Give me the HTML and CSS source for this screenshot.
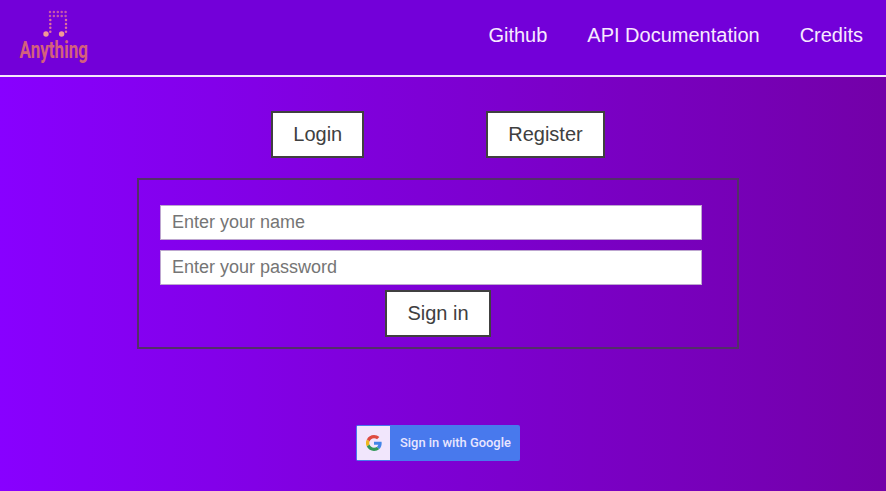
FILE: index.html
```html
<!DOCTYPE html>
<html lang="en">
<head>
<meta charset="utf-8">
<title>Anything</title>
<link rel="stylesheet" href="styles.css">
</head>
<body>
<header class="header">
  <svg class="logo" width="90" height="66" viewBox="0 0 90 66">
    <g class="dots" stroke-width="2.5" stroke-linecap="round" stroke-dasharray="0 3.9">
      <path d="M34 5H50.500M34 9H50.500" opacity=".78"/>
      <path d="M34.300 13V24.800M50 13V24.800"/>
    </g>
    <circle class="note" cx="30" cy="27" r="2.7"/>
    <circle class="note" cx="45.600" cy="27" r="2.7"/>
    <text class="wordmark" x="3.500" y="50.500" textLength="68.500" lengthAdjust="spacingAndGlyphs">Anything</text>
  </svg>
  <nav class="nav">
    <a>Github</a>
    <a>API Documentation</a>
    <a>Credits</a>
  </nav>
</header>
<main class="main">
  <div class="tabs">
    <button class="button">Login</button>
    <button class="button">Register</button>
  </div>
  <form class="form">
    <input class="field" type="text" placeholder="Enter your name">
    <input class="field" type="password" placeholder="Enter your password">
    <button class="button" type="button">Sign in</button>
  </form>
  <button class="google">
    <span class="google-icon">
      <svg width="16" height="16" viewBox="0 0 48 48">
        <path fill="#de4b40" d="M24 9.500c3.500 0 6.700 1.200 9.200 3.600l6.900-6.900C35.900 2.400 30.500 0 24 0 14.600 0 6.500 5.400 2.600 13.200l8 6.200C12.400 13.700 17.700 9.500 24 9.500z"/>
        <path fill="#4285e8" d="M47 24.600c0-1.600-.2-3.100-.4-4.600H24v9h12.900c-.6 3-2.200 5.500-4.700 7.200l7.700 6C44.400 38 47 31.800 47 24.600z"/>
        <path fill="#eeb61c" d="M10.500 28.600a14.500 14.500 0 0 1 0-9.200l-8-6.200a24 24 0 0 0 0 21.600z"/>
        <path fill="#319858" d="M24 48c6.500 0 11.900-2.100 15.900-5.800l-7.700-6c-2.200 1.500-4.900 2.300-8.200 2.300-6.300 0-11.600-4.200-13.500-9.900l-8 6.200C6.500 42.600 14.600 48 24 48z"/>
      </svg>
    </span>
    <span class="google-label">Sign in with Google</span>
  </button>
</main>
</body>
</html>
```
FILE: styles.css
```css
* {
  box-sizing: border-box;
}

body {
  margin: 0;
  height: 491px;
  overflow: hidden;
  font-family: "Liberation Sans", Arial, sans-serif;
  font-size: 20px;
  background: linear-gradient(to right, #8800ff, #7300a8);
}

.header {
  display: flex;
  justify-content: space-between;
  height: 77px;
  padding: 7px 23px 0 16px;
  background: #7300d9;
  border-bottom: 2px solid #f5e9fa;
}

.logo {
  display: block;
  overflow: visible;
}

.dots {
  fill: none;
  stroke: #df719c;
}

.note {
  fill: #f29a95;
}

.wordmark {
  font: 700 23px Roboto, sans-serif;
  fill: #d4607c;
}

.nav {
  display: flex;
  gap: 40px;
  padding-top: 17px;
  line-height: 23px;
  color: #f8e9ff;
}

.main {
  display: flex;
  flex-direction: column;
  align-items: center;
  padding: 34px 10px 0 0;
}

.tabs {
  display: flex;
  gap: 122px;
}

.button {
  height: 47px;
  padding: 0 20px;
  font: inherit;
  color: #404040;
  background: #fff;
  border: 2px solid #404040;
}

.form {
  display: flex;
  flex-direction: column;
  align-items: center;
  width: 602px;
  height: 171px;
  margin-top: 20px;
  padding: 25px 34px 0 21px;
  border: 2px solid #523068;
}

.field {
  align-self: flex-start;
  width: 542px;
  height: 35px;
  margin-bottom: 10px;
  padding: 0 11px;
  font: 18px "Liberation Sans", Arial, sans-serif;
  background: #fff;
  border: 1px solid #bda6cf;
}

.field::placeholder {
  color: #757575;
}

.form .button {
  margin-top: -5px;
  margin-left: 13px;
}

.google {
  display: flex;
  width: 164px;
  height: 36px;
  margin-top: 76px;
  padding: 1px;
  border: 0;
  border-radius: 2px;
  background: #4879ed;
}

.google-icon {
  display: flex;
  align-items: center;
  justify-content: center;
  width: 33px;
  height: 34px;
  background: #f1e6fc;
}

.google-label {
  padding-left: 10px;
  font: 500 12.9px/34px Roboto, sans-serif;
  color: #e9e6ff;
  white-space: nowrap;
}
```
